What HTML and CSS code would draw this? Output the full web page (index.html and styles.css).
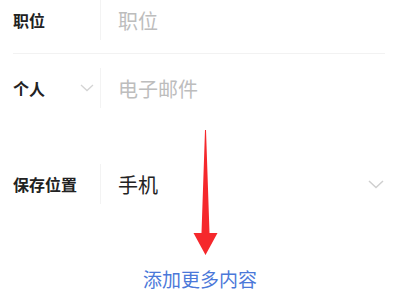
FILE: index.html
```html
<!DOCTYPE html>
<html>
<head>
<meta charset="utf-8">
<link rel="stylesheet" href="styles.css">
</head>
<body>
<div class="page">
  <div class="row row1">
    <div class="label">职位</div>
    <div class="vsep"></div>
    <div class="value placeholder">职位</div>
  </div>
  <div class="hline"></div>
  <div class="row row2">
    <div class="label">个人
      <svg class="chev small" viewBox="0 0 14 8" width="14" height="8"><path d="M1 1 L7 6.5 L13 1" fill="none" stroke="#d4d4d4" stroke-width="1.3"/></svg>
    </div>
    <div class="vsep"></div>
    <div class="value placeholder">电子邮件</div>
  </div>
  <div class="row row3">
    <div class="label">保存位置</div>
    <div class="vsep"></div>
    <div class="value filled">手机</div>
    <svg class="chev" viewBox="0 0 16 9" width="16" height="9"><path d="M1 1 L8 7.5 L15 1" fill="none" stroke="#cfcfcf" stroke-width="1.5"/></svg>
  </div>
  <div class="more">添加更多内容</div>
  <svg class="arrow" viewBox="0 0 26 126" width="26" height="126">
    <path d="M12 0 L13 0 L16.5 103 L24.5 103 L12.5 125 L0.5 103 L8.5 103 Z" fill="#f5282c"/>
  </svg>
</div>
</body>
</html>
```
FILE: styles.css
```css
html, body {
  margin: 0;
  padding: 0;
  background: #fff;
}
body {
  font-family: "Noto Sans CJK SC", "Noto Sans", sans-serif;
  width: 400px;
  height: 300px;
  overflow: hidden;
}
.page {
  position: relative;
  width: 400px;
  height: 300px;
}
.row {
  display: flex;
  align-items: center;
  height: 40px;
  padding-left: 13px;
  padding-right: 16px;
}
.row2 {
  margin-top: 14px;
}
.row3 {
  margin-top: 56px;
}
.label {
  width: 87px;
  font-size: 16px;
  font-weight: 700;
  color: #222;
  display: flex;
  align-items: center;
}
.chev.small {
  margin-left: 35px;
}
.vsep {
  width: 1px;
  height: 40px;
  background: #f3f3f3;
  margin-right: 17px;
}
.value {
  font-size: 20px;
  flex: 1;
}
.placeholder {
  color: #bdbdbd;
}
.filled {
  color: #222;
}
.hline {
  height: 1px;
  background: #f2f2f2;
  margin: 13px 15px 0 13px;
}
.more {
  margin-top: 61px;
  line-height: 28px;
  text-align: center;
  font-size: 19px;
  color: #4b78d9;
}
.arrow {
  position: absolute;
  left: 193px;
  top: 130px;
}
```
